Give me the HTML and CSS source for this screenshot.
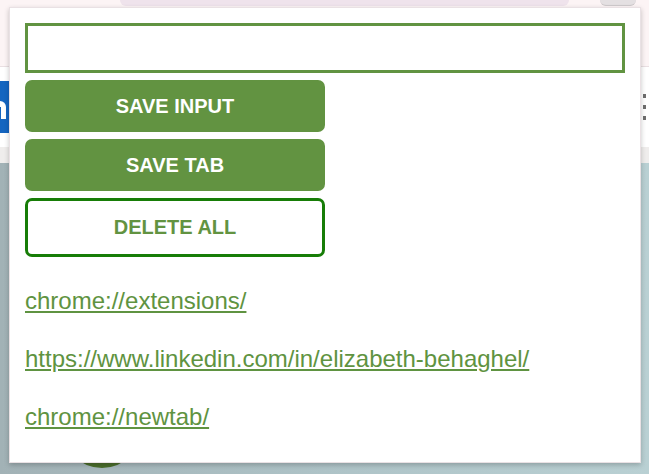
FILE: index.html
```html
<!DOCTYPE html>
<html lang="en">
<head>
<meta charset="utf-8">
<title>Leads tracker</title>
<link rel="stylesheet" href="styles.css">
</head>
<body>
<div class="page">
  <div class="topbar">
    <div class="pill"></div>
    <div class="avatar"></div>
  </div>
  <div class="nav">
    <div class="logo"><span class="logo-letter"></span></div>
    <div class="dots"><i></i><i></i><i></i></div>
  </div>
  <div class="band"></div>
  <div class="hero">
    <div class="circle"></div>
  </div>
</div>

<div class="popup">
  <input class="field" type="text">
  <button class="btn">SAVE INPUT</button>
  <button class="btn">SAVE TAB</button>
  <button class="btn btn-outline">DELETE ALL</button>
  <ul class="leads">
    <li><a href="#">chrome://extensions/</a></li>
    <li><a href="#">https://www.linkedin.com/in/elizabeth-behaghel/</a></li>
    <li><a href="#">chrome://newtab/</a></li>
  </ul>
</div>
</body>
</html>
```

FILE: styles.css
```css
* { box-sizing: border-box; }

html, body {
  margin: 0;
  padding: 0;
}

body {
  width: 649px;
  height: 474px;
  overflow: hidden;
  position: relative;
  font-family: "Liberation Sans", Arial, sans-serif;
  background: #ffffff;
}

/* background page */
.page {
  display: flex;
  flex-direction: column;
  height: 474px;
}

.topbar {
  height: 67px;
  background: #fcf4f5;
  border-bottom: 1px solid #e9dfe2;
  display: flex;
  align-items: flex-start;
  padding-left: 120px;
}

.pill {
  width: 449px;
  height: 6px;
  background: #efe3ec;
  border-radius: 0 0 8px 8px;
}

.avatar {
  width: 36px;
  height: 6px;
  margin-left: 31px;
  background: #e4e0e2;
  border-radius: 0 0 18px 18px;
  border-bottom: 1px solid #cfcacc;
}

.nav {
  height: 80px;
  background: #ffffff;
  display: flex;
  justify-content: space-between;
  align-items: flex-start;
}

.logo {
  width: 9px;
  height: 52px;
  margin-top: 14px;
  background: #1565c0;
  position: relative;
  overflow: hidden;
}

.logo-letter {
  display: block;
  width: 6px;
  height: 18px;
  margin-top: 20px;
  margin-left: 0;
  border-top: 6px solid #ffffff;
  border-right: 5px solid #ffffff;
  border-top-right-radius: 6px;
}

.dots {
  width: 7px;
  display: flex;
  flex-direction: column;
  gap: 7px;
  margin-top: 27px;
}

.dots i {
  display: block;
  width: 3px;
  height: 4px;
  background: #6e6e6e;
  margin-left: 1px;
}

.band {
  height: 16px;
  background: #efedec;
}

.hero {
  flex: 1;
  background: linear-gradient(90deg, #a2b2b6 0%, #aec3c7 50%, #b9d0d3 100%);
  display: flex;
  align-items: flex-end;
  padding-left: 62px;
}

.circle {
  width: 80px;
  height: 40px;
  margin-bottom: 6px;
  background: #4b6e2c;
  border-radius: 0 0 40px 40px;
}

/* popup */
.popup {
  position: absolute;
  left: 9px;
  top: 7px;
  width: 632px;
  height: 456px;
  background: #ffffff;
  border: 1px solid #e9e1e4;
  box-shadow: 0 2px 5px rgba(0, 0, 0, 0.22);
  padding: 15px;
}

.field {
  display: block;
  width: 600px;
  height: 50px;
  margin: 0 0 7px 0;
  border: 3px solid #619341;
  background: #ffffff;
  outline: none;
}

.btn {
  display: flex;
  align-items: center;
  justify-content: center;
  width: 300px;
  height: 52px;
  margin: 0 0 7px 0;
  padding: 0;
  border: none;
  border-radius: 7px;
  background: #629341;
  color: #ffffff;
  font-family: "Liberation Sans", Arial, sans-serif;
  font-weight: bold;
  font-size: 20px;
}

.btn-outline {
  height: 59px;
  margin-bottom: 0;
  background: #ffffff;
  color: #629341;
  border: 3px solid #177d07;
}

.leads {
  list-style: none;
  margin: 30px 0 0 0;
  padding: 0;
}

.leads li {
  line-height: 28px;
  margin-bottom: 30px;
  font-size: 24px;
}

.leads a {
  color: #5f9341;
  text-decoration: underline;
}
```
